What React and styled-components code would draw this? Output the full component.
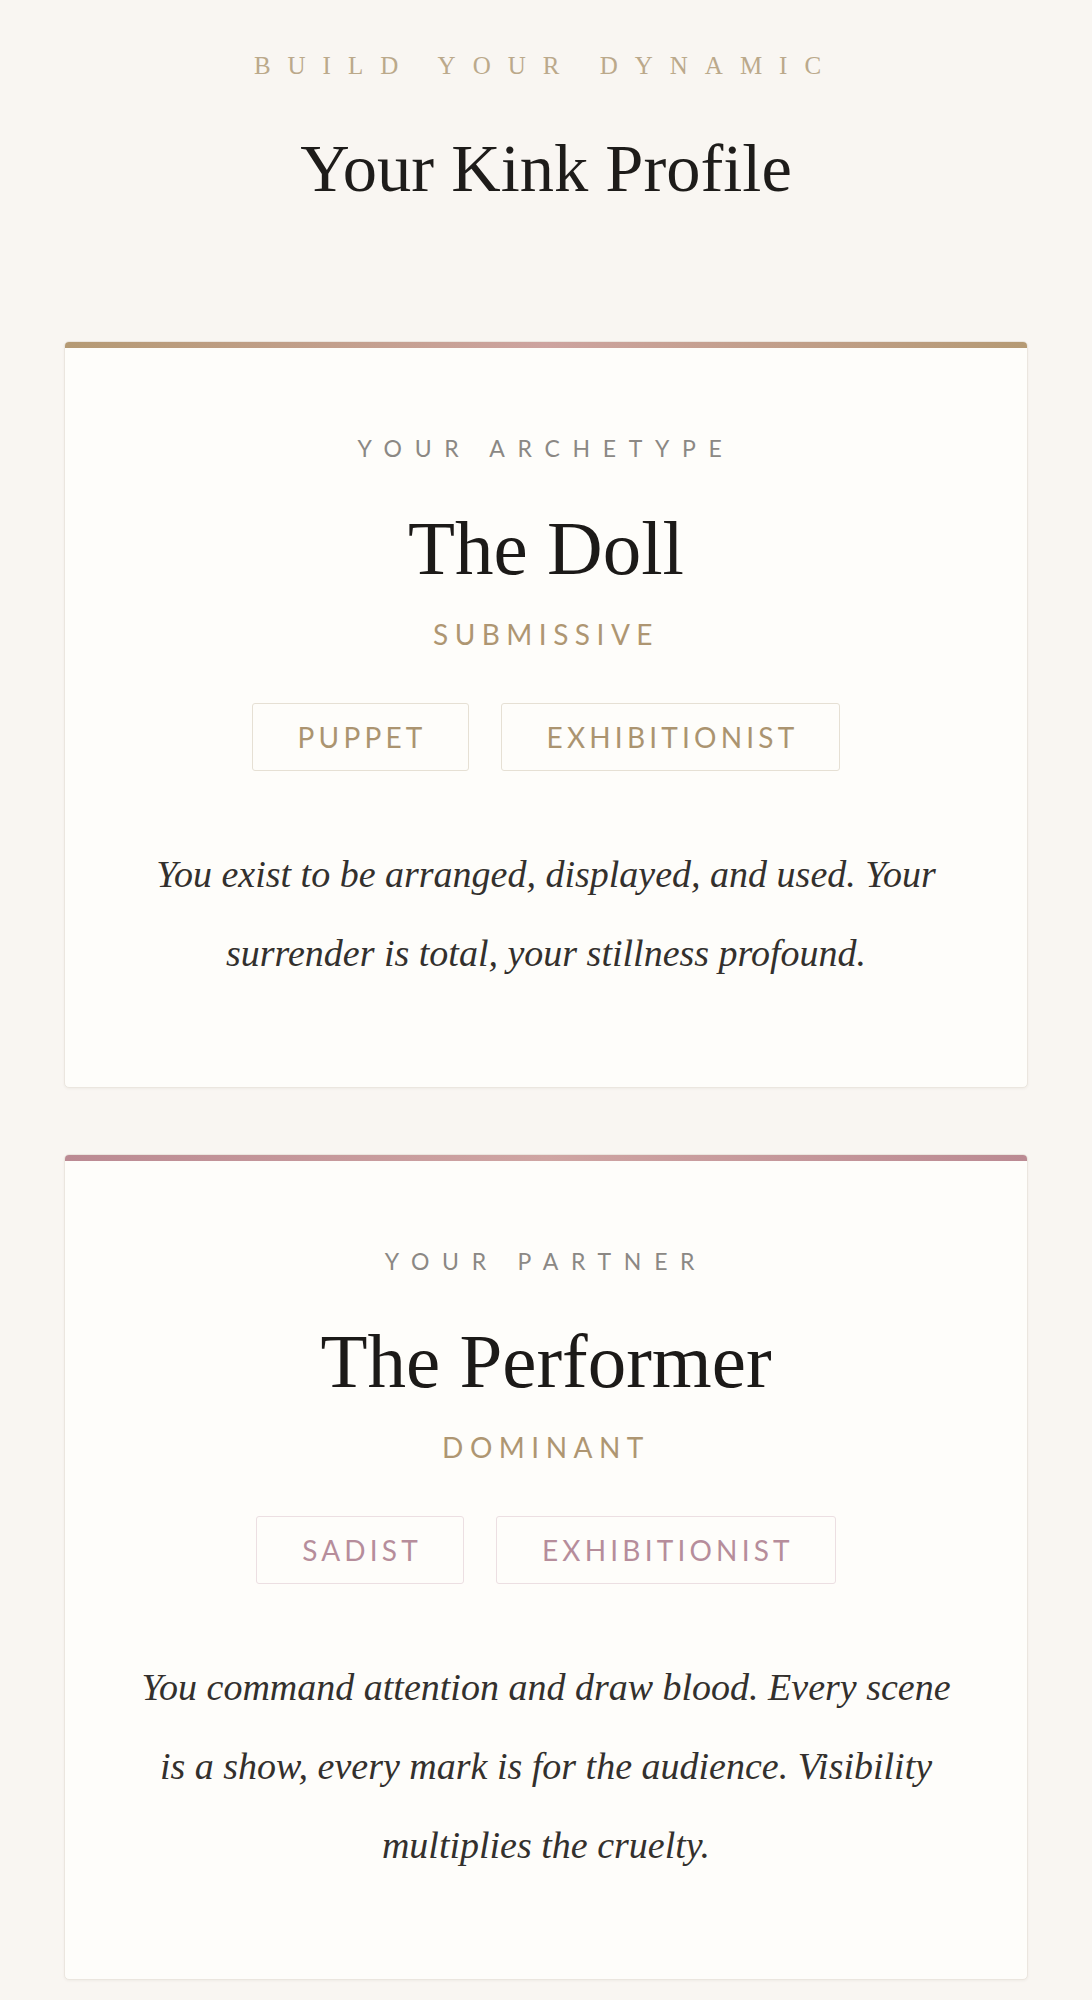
import React from "react";
import styled, { createGlobalStyle } from "styled-components";

const GlobalStyle = createGlobalStyle`
  html, body {
    margin: 0;
    padding: 0;
    background: #f9f6f2;
  }
  body {
    font-family: "Liberation Serif", "Times New Roman", serif;
    -webkit-font-smoothing: antialiased;
  }
  * { box-sizing: border-box; }
`;

const Page = styled.main`
  padding: 51px 64px 20px;
  display: flex;
  flex-direction: column;
  align-items: stretch;
`;

const Header = styled.header`
  display: flex;
  flex-direction: column;
  align-items: center;
  margin-bottom: 133px;
`;

const Eyebrow = styled.div`
  font-family: "Liberation Serif", serif;
  font-size: 25px;
  line-height: 30px;
  letter-spacing: 17px;
  color: #bba98b;
  text-transform: uppercase;
`;

const Title = styled.h1`
  margin: 47px 0 0;
  font-family: "Liberation Serif", serif;
  font-weight: 400;
  font-size: 68.5px;
  line-height: 80px;
  color: #1e1c1a;
`;

const CardList = styled.div`
  display: flex;
  flex-direction: column;
  gap: 66px;
`;

const Card = styled.section`
  background: #fefdfa;
  border: 1px solid #ebe6df;
  border-radius: 5px;
  overflow: hidden;
  box-shadow: 0 1px 3px rgba(60, 40, 20, 0.05);
  text-align: center;
`;

const AccentBar = styled.div`
  height: 6px;
  background: ${(p) => p.$gradient};
`;

const CardBody = styled.div`
  padding: 86px 40px 94px;
  display: flex;
  flex-direction: column;
  align-items: center;
`;

const Label = styled.div`
  font-family: Lato, "Noto Sans", sans-serif;
  font-size: 23px;
  line-height: 28px;
  letter-spacing: 12.7px;
  color: #8b8884;
  text-transform: uppercase;
`;

const Name = styled.h2`
  margin: 43px 0 0;
  font-family: "Liberation Serif", serif;
  font-weight: 400;
  font-size: 77px;
  line-height: 86px;
  color: #1c1a18;
`;

const Role = styled.div`
  margin-top: 26px;
  font-family: Lato, "Noto Sans", sans-serif;
  font-size: 28px;
  line-height: 34px;
  letter-spacing: 6.5px;
  color: #ae9672;
  text-transform: uppercase;
`;

const TagRow = styled.div`
  margin-top: 52px;
  display: flex;
  justify-content: center;
  gap: 32px;
`;

const Tag = styled.span`
  display: inline-block;
  padding: 16px 41px 16px 45px;
  border: 1px solid ${(p) => p.$border};
  border-radius: 3px;
  font-family: Lato, "Noto Sans", sans-serif;
  font-size: 28px;
  line-height: 34px;
  letter-spacing: 4.2px;
  color: ${(p) => p.$color};
  text-transform: uppercase;
`;

const Description = styled.p`
  margin: 64px 0 0;
  max-width: 830px;
  font-family: "Liberation Serif", serif;
  font-style: italic;
  font-size: 38px;
  line-height: 79px;
  color: #33302d;
`;

const cards = [
  {
    label: "Your Archetype",
    name: "The Doll",
    role: "Submissive",
    tags: ["Puppet", "Exhibitionist"],
    gradient: "linear-gradient(90deg, #b59a74 0%, #cda39f 50%, #b59a74 100%)",
    tagColor: "#ab9470",
    tagBorder: "#e6e0d4",
    text: "You exist to be arranged, displayed, and used. Your surrender is total, your stillness profound.",
  },
  {
    label: "Your Partner",
    name: "The Performer",
    role: "Dominant",
    tags: ["Sadist", "Exhibitionist"],
    gradient: "linear-gradient(90deg, #bb8a93 0%, #cfa5a3 50%, #bb8a93 100%)",
    tagColor: "#b68d9b",
    tagBorder: "#ecdfe2",
    text: "You command attention and draw blood. Every scene is a show, every mark is for the audience. Visibility multiplies the cruelty.",
  },
];

export default function App() {
  return (
    <>
      <GlobalStyle />
      <Page>
        <Header>
          <Eyebrow>Build your dynamic</Eyebrow>
          <Title>Your Kink Profile</Title>
        </Header>
        <CardList>
          {cards.map((c) => (
            <Card key={c.name}>
              <AccentBar $gradient={c.gradient} />
              <CardBody>
                <Label>{c.label}</Label>
                <Name>{c.name}</Name>
                <Role>{c.role}</Role>
                <TagRow>
                  {c.tags.map((t) => (
                    <Tag key={t} $color={c.tagColor} $border={c.tagBorder}>
                      {t}
                    </Tag>
                  ))}
                </TagRow>
                <Description>{c.text}</Description>
              </CardBody>
            </Card>
          ))}
        </CardList>
      </Page>
    </>
  );
}
